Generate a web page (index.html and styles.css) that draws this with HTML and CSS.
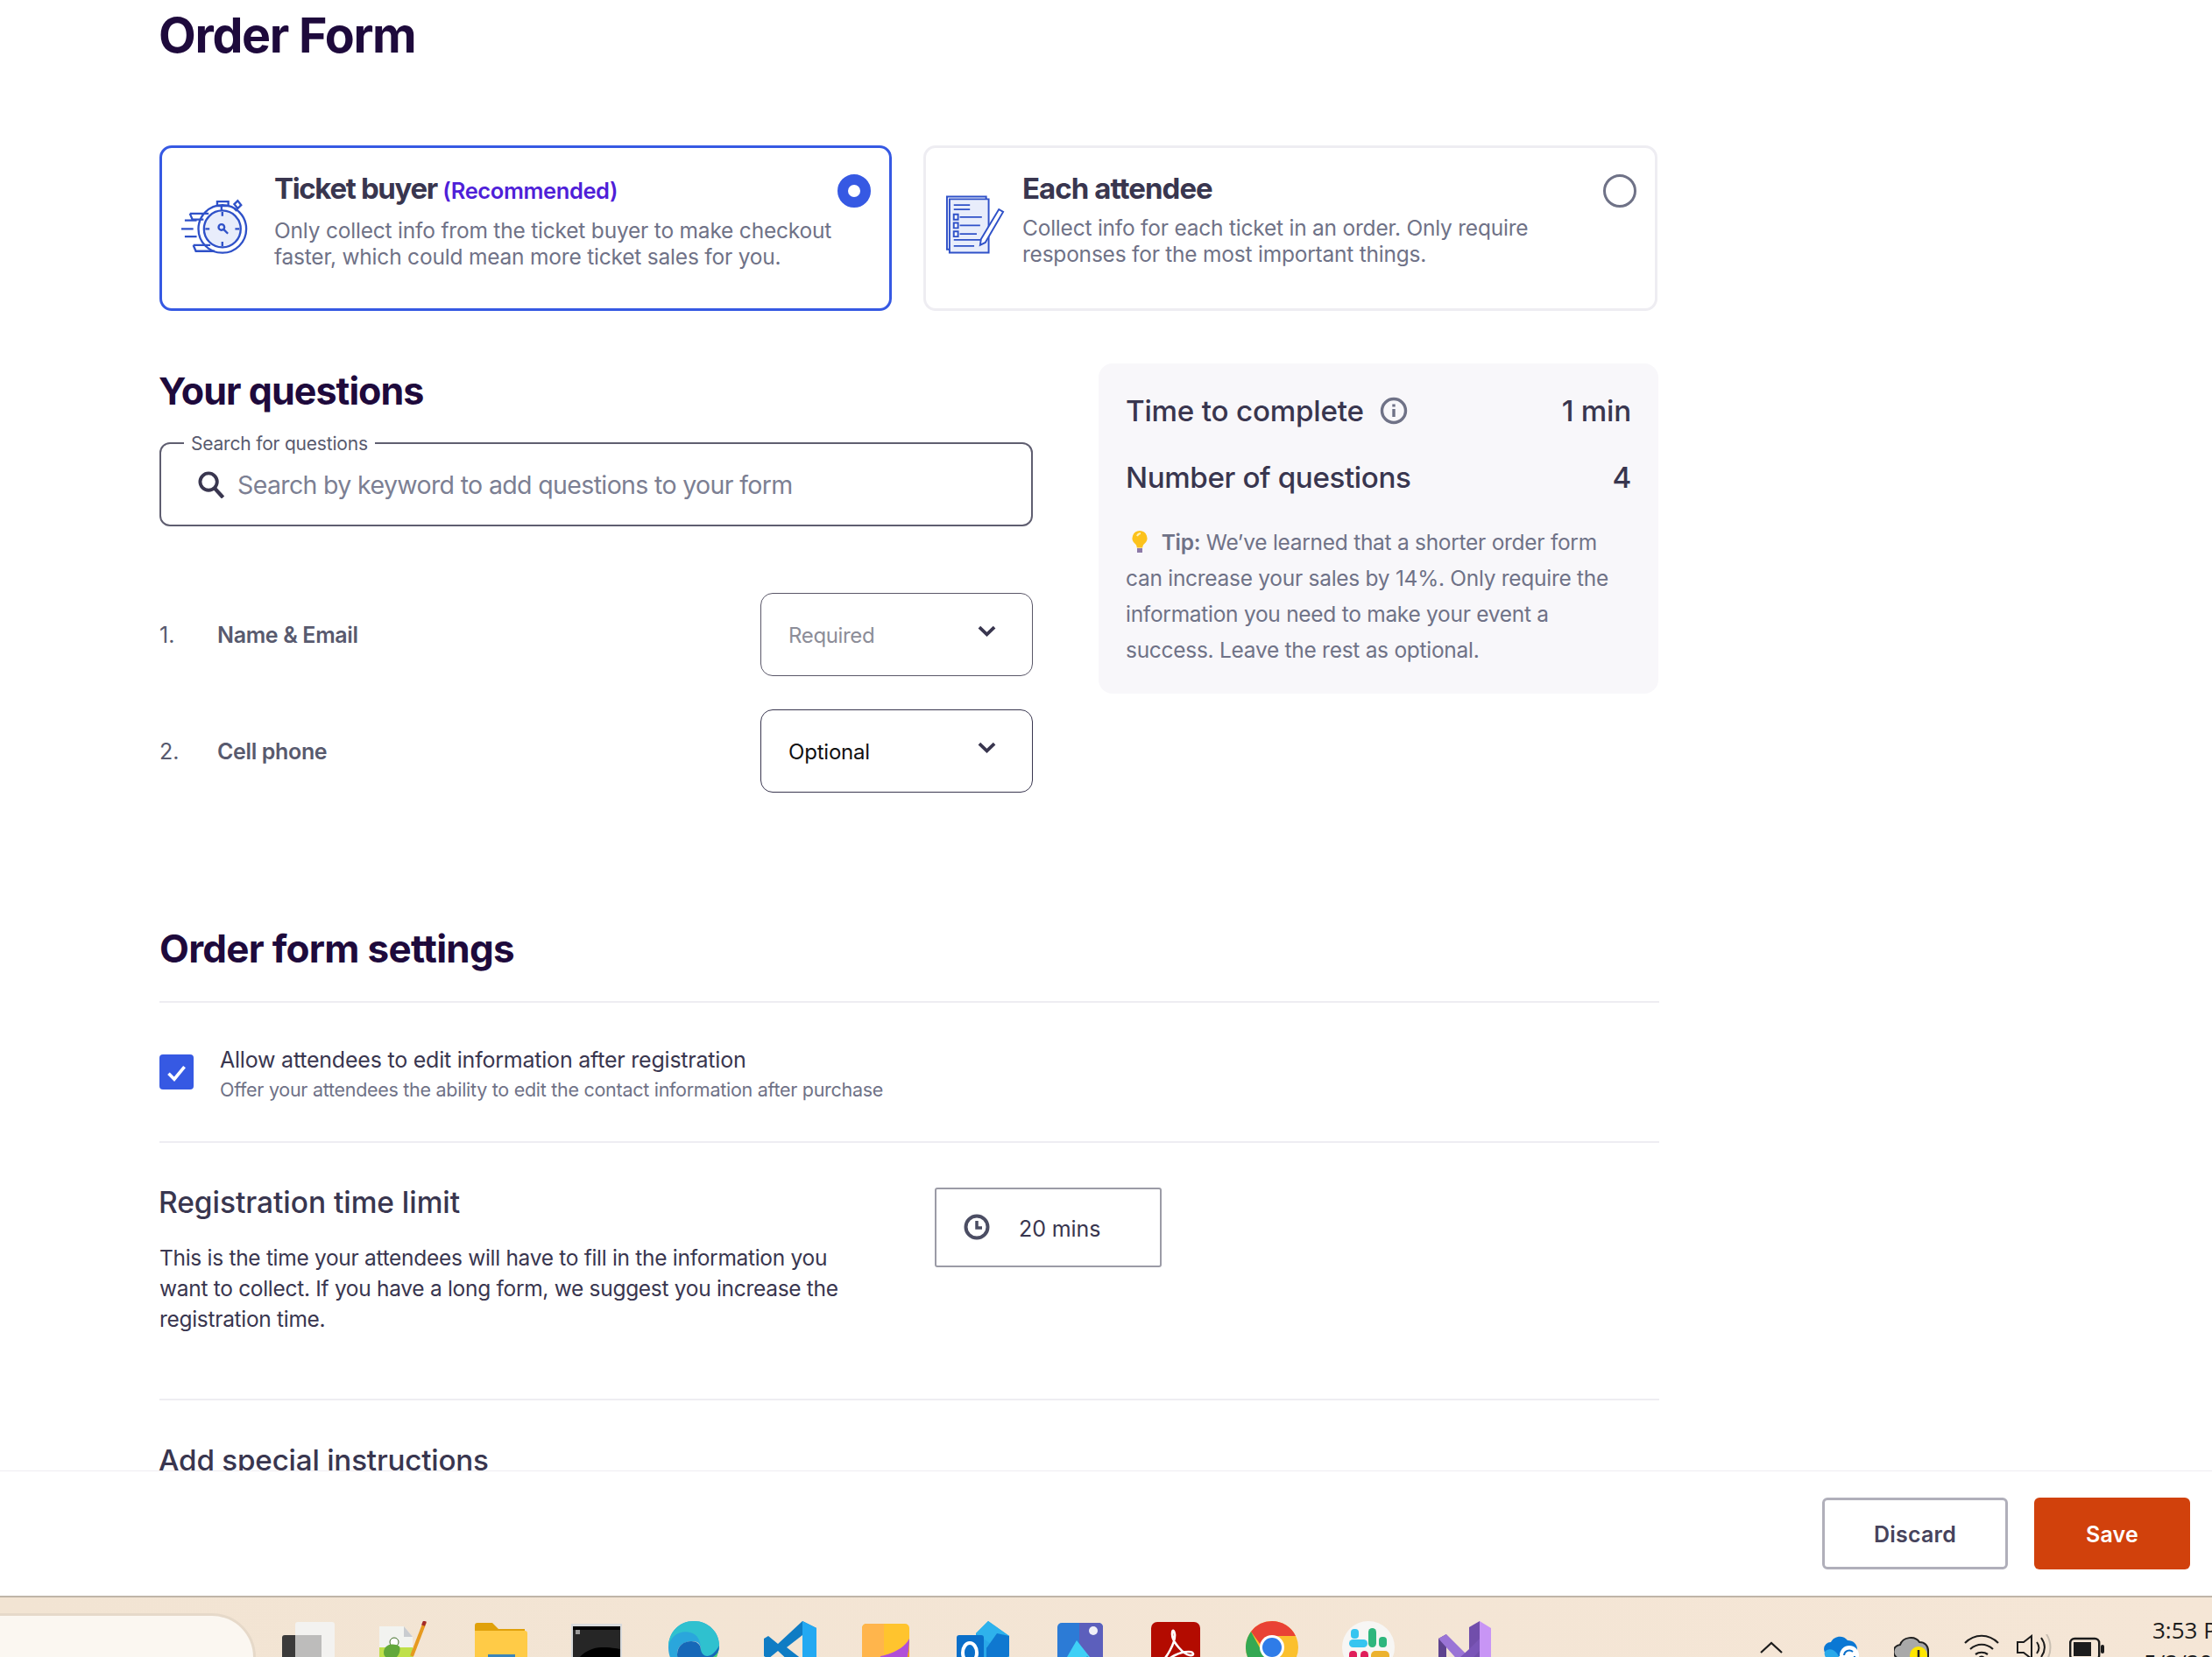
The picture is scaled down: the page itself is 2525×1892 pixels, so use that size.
FILE: index.html
```html
<!DOCTYPE html>
<html lang="en">
<head>
<meta charset="utf-8">
<title>Order Form</title>
<link rel="stylesheet" href="styles.css">
</head>
<body>
<div class="page">
  <main class="main">
    <h1 class="title">Order Form</h1>

    <div class="cards">
      <section class="card card-active">
        <svg class="card-icon" viewBox="0 0 80 68" fill="none" stroke="#2f51c8" stroke-width="2.4">
          <circle cx="48" cy="38" r="28" fill="#fff"/>
          <circle cx="48" cy="38" r="21.5" fill="#e8edfb"/>
          <path d="M42 6h13v5H42zM47 11v5"/>
          <path d="M62 9l4-4 4 5-4 4zM62 14l3 3"/>
          <path d="M10 20h22M10 20l3 7h13M14 57h20M14 57l3 7h22M0 38h14M4 28h14M4 47h14"/>
          <path d="M48 18v5M48 53v5M28 38h5M63 38h5"/>
          <circle cx="47" cy="36" r="3.4"/>
          <path d="M49.500 38.500l5 5"/>
        </svg>
        <div class="card-text">
          <h3 class="card-title card-title-buyer">Ticket buyer <span class="rec">(Recommended)</span></h3>
          <p class="card-desc">Only collect info from the ticket buyer to make checkout faster, which could mean more ticket sales for you.</p>
        </div>
        <span class="radio radio-on"></span>
      </section>
      <section class="card card-idle">
        <svg class="card-icon card-icon-doc" viewBox="0 0 70 68" fill="none" stroke="#2f51c8" stroke-width="2">
          <path d="M1 1h46v62H1z" fill="#fff"/>
          <path d="M4 4h46v63H4z" fill="#e8edfb"/>
          <path d="M9 11h19M9 16h19M9 52h38M9 59h24" stroke-width="1.800"/>
          <path d="M9 22h5v6H9zM9 32h5v6H9zM9 42h5v6H9z" fill="#fff"/>
          <path d="M16 25h26M16 35h24M16 45h20" stroke-width="1.800"/>
          <path d="M62 16l5 3-21 36-6 3 1-7z" fill="#fff"/>
        </svg>
        <div class="card-text card-text-idle">
          <h3 class="card-title">Each attendee</h3>
          <p class="card-desc">Collect info for each ticket in an order. Only require responses for the most important things.</p>
        </div>
        <span class="radio"></span>
      </section>
    </div>

    <div class="lower">
      <div class="questions">
        <h2 class="section-title">Your questions</h2>
        <div class="search">
          <span class="search-label">Search for questions</span>
          <svg class="search-icon" viewBox="0 0 32 32" fill="none" stroke="#39364f" stroke-width="4"><circle cx="12.500" cy="12.500" r="10"/><path d="M19.500 20l10 11" stroke-width="4.500"/></svg>
          <span class="search-placeholder">Search by keyword to add questions to your form</span>
        </div>
        <div class="q-row q-row-first">
          <span class="q-num">1.</span>
          <span class="q-name">Name &amp; Email</span>
          <div class="select select-off">
            <span>Required</span>
            <svg class="chev" viewBox="0 0 22 13" fill="none" stroke="#39364f" stroke-width="4"><path d="M2 2l9 8.500 9-8.500"/></svg>
          </div>
        </div>
        <div class="q-row">
          <span class="q-num">2.</span>
          <span class="q-name">Cell phone</span>
          <div class="select">
            <span>Optional</span>
            <svg class="chev" viewBox="0 0 22 13" fill="none" stroke="#39364f" stroke-width="4"><path d="M2 2l9 8.500 9-8.500"/></svg>
          </div>
        </div>
      </div>

      <aside class="panel">
        <div class="stat">
          <span class="stat-label">Time to complete
            <svg class="info" viewBox="0 0 32 32" fill="none" stroke="#6f7287" stroke-width="3.400"><circle cx="16" cy="16" r="13.500"/><path d="M16 14v9M16 8.500v3"/></svg>
          </span>
          <span class="stat-value">1 min</span>
        </div>
        <div class="stat stat-second">
          <span class="stat-label">Number of questions</span>
          <span class="stat-value">4</span>
        </div>
        <p class="tip">
          <svg class="bulb" viewBox="0 0 20 28"><path d="M10 1a8.500 8.500 0 0 0-5 15.300c1.200 1 1.600 2.400 1.800 4.200h6.400c.2-1.800.6-3.200 1.800-4.200A8.500 8.500 0 0 0 10 1z" fill="#fcc21b"/><path d="M7 7a5 5 0 0 1 4-3" stroke="#fff2b8" stroke-width="2" fill="none"/><path d="M7 21h6v5H7z" fill="#8d7aa8"/></svg>
          <b class="tip-b">Tip:</b> We’ve learned that a shorter order form can increase your sales by 14%. Only require the information you need to make your event a success. Leave the rest as optional.
        </p>
      </aside>
    </div>

    <section class="settings">
      <h2 class="section-title settings-title">Order form settings</h2>
      <div class="check-row">
        <span class="checkbox">
          <svg viewBox="0 0 24 24" fill="none" stroke="#fff" stroke-width="2.800"><path d="M5 13l5 5 9-11"/></svg>
        </span>
        <div>
          <div class="check-title">Allow attendees to edit information after registration</div>
          <div class="check-sub">Offer your attendees the ability to edit the contact information after purchase</div>
        </div>
      </div>
      <div class="limit-row">
        <div class="limit-text">
          <h3 class="sub-title">Registration time limit</h3>
          <p class="limit-desc">This is the time your attendees will have to fill in the information you want to collect. If you have a long form, we suggest you increase the registration time.</p>
        </div>
        <div class="time-box">
          <svg class="clock" viewBox="0 0 30 30" fill="none" stroke="#4b4d63" stroke-width="4"><circle cx="15" cy="15" r="12.500"/><path d="M15 8v8h6" stroke-width="3.500"/></svg>
          <span class="time-value">20 mins</span>
        </div>
      </div>
      <h3 class="sub-title instructions">Add special instructions</h3>
    </section>
  </main>

  <footer class="footer">
    <button class="btn btn-discard">Discard</button>
    <button class="btn btn-save">Save</button>
  </footer>

  <div class="taskbar">
    <div class="pill"></div>
    <div class="apps">
      <svg class="app" viewBox="0 0 60 60"><rect x="15" y="1" width="45" height="64" rx="3" fill="#f3f2f0"/><rect y="16" width="45" height="60" rx="3" fill="#3b3a3a"/><rect x="15" y="16" width="30" height="44" fill="#bdbcbb"/></svg>
      <svg class="app" viewBox="0 0 60 60"><path d="M1 6h28l10 12v42H1z" fill="#f2f3f0"/><path d="M1 30h38v30H1z" fill="#bfe04a"/><path d="M29 6l10 12H29z" fill="#c9ccd0"/><circle cx="18" cy="24" r="5" fill="#fff" stroke="#3c6b23"/><path d="M6 36c0-9 10-12 18-7 2 6-2 14-8 14S6 41 6 36z" fill="#62a83a"/><path d="M38 40L53 1" stroke="#e69a1f" stroke-width="4"/><path d="M51 5l2-5" stroke="#a32a2a" stroke-width="4"/></svg>
      <svg class="app" viewBox="0 0 60 60"><path d="M0 5a3 3 0 0 1 3-3h17l7 7h30v52H0z" fill="#e0a10a"/><path d="M0 11h57a3 3 0 0 1 3 3v46H0z" fill="#ffcb47"/><rect x="15" y="38" width="31" height="22" fill="#3b84b8"/></svg>
      <svg class="app" viewBox="0 0 60 60"><rect y="3" width="58" height="57" fill="#d8dadb"/><rect x="2" y="6" width="54" height="54" fill="#000"/><path d="M2 60c0-18 18-30 32-30 10 0 18 1 22 2V10H2z" fill="#262626"/><path d="M5 10h5v5H5z" fill="#999"/></svg>
      <svg class="app" viewBox="0 0 60 60"><path d="M1 30C1 13 13 0 30 0c17 0 29 13 29 28 0 9-5 14-12 14-6 0-9-4-9-9 0-6-3-10-9-10C16 23 11 30 11 38c0 12 8 20 19 22C13 60 1 47 1 30z" fill="#2aa6dc"/><path d="M1 30c2-14 14-20 25-17 8 2 12 9 12 20 0 5 3 9 9 9 6 0 12-5 12-14 0-15-12-28-29-28C13 0 1 13 1 30z" fill="#2fc1cf"/><path d="M38 33c2 9 12 11 21-5-1 14-10 27-24 31-10 1-24-7-24-21 0-10 8-15 16-15 6 0 11 3 11 10z" fill="#1668b8"/><path d="M47 42c6 0 12-5 12-14-1 14-8 24-16 29-5-2-8-7-5-16 2 1 5 1 9 1z" fill="#4fd36f"/></svg>
      <svg class="app" viewBox="0 0 60 60"><path d="M44 0l16 8v44l-16 8L16 34 5 43 0 40V20l5-3 11 9z" fill="#0f7cc4"/><path d="M44 0l16 8v44l-16 8z" fill="#23a9f2"/><path d="M44 16L26 30l18 14z" fill="#f3e5d4"/></svg>
      <svg class="app" viewBox="0 0 60 60"><rect x="2" y="3" width="54" height="62" rx="5" fill="#ffc42e"/><path d="M2 8a5 5 0 0 1 5-5h20v62H2z" fill="#ffb54c"/><path d="M23 60V40c10-2 26-7 33-20 0 18-4 36-14 40z" fill="#b04fd8"/><path d="M42 60c8-4 14-18 14-40v40z" fill="#f0a020"/></svg>
      <svg class="app" viewBox="0 0 60 60"><path d="M36 0l24 17v38H22V14z" fill="#29a8e8"/><path d="M36 0l24 17-14 14-24-17z" fill="#2eb2ec"/><path d="M60 17v22L34 60V31z" fill="#0556a3"/><path d="M46 14l14 3v22L34 60V31z" fill="#0f78d0"/><rect y="16" width="31" height="44" rx="3" fill="#0a6fc9"/><ellipse cx="15" cy="36" rx="8" ry="11" fill="none" stroke="#fff" stroke-width="4"/></svg>
      <svg class="app" viewBox="0 0 60 60"><rect x="5" y="2" width="52" height="62" rx="5" fill="#2c7bd6"/><path d="M30 2h22a5 5 0 0 1 5 5v50H30z" fill="#5c5fbc"/><ellipse cx="46" cy="11" rx="5" ry="5" fill="#f0f0f8"/><path d="M5 60l22-38 30 38z" fill="#3fd0f6"/><path d="M25 60l14-20 18 20z" fill="#1c70c8"/></svg>
      <svg class="app" viewBox="0 0 60 60"><rect x="2" y="1" width="56" height="62" rx="7" fill="#b30b00"/><path d="M13 47c6-4 17-22 16-32-1-6-3-5-3 0 0 9 13 23 20 24 6 1 5-4-1-4-10 0-24 6-29 16-1 3 1 4 3 1" fill="none" stroke="#fff" stroke-width="2.600"/></svg>
      <svg class="app" viewBox="0 0 60 60"><circle cx="30" cy="30" r="30" fill="#fbc02d"/><path d="M30 0a30 30 0 0 1 27 17H30a13 13 0 0 0-13 10L6 12A30 30 0 0 1 30 0z" fill="#e94235"/><path d="M6 12l13 24 10 24A30 30 0 0 1 6 12z" fill="#34a853"/><circle cx="30" cy="30" r="14" fill="#fff"/><circle cx="30" cy="30" r="11" fill="#2f7ce8"/></svg>
      <svg class="app" viewBox="0 0 60 60"><circle cx="30" cy="30" r="30" fill="#f7f6f4"/><rect x="10" y="9" width="9" height="11" rx="4" fill="#36c5f0"/><rect x="8" y="21" width="21" height="9" rx="4.500" fill="#36c5f0"/><rect x="30" y="8" width="9" height="22" rx="4.500" fill="#2eb67d"/><rect x="42" y="18" width="9" height="12" rx="4" fill="#2eb67d"/><rect x="8" y="34" width="9" height="12" rx="4" fill="#e01e5a"/><rect x="21" y="34" width="9" height="22" rx="4.500" fill="#e01e5a"/><rect x="33" y="34" width="21" height="12" rx="5" fill="#ecb22e"/></svg>
      <svg class="app" viewBox="0 0 60 60"><path d="M0 20l9-5v42l-9-5z" fill="#5e438f"/><path d="M35 7l12-7v60L35 50z" fill="#714eab"/><path d="M47 0l13 8v44l-13 8z" fill="#c895f5"/><path d="M0 20l9-5 38 38v7l-12-1z" fill="#9a74d6"/><path d="M13 52L35 32l12-12v14L22 60z" fill="#7a55b8"/></svg>
    </div>
    <div class="tray">
      <svg class="tray-chev" viewBox="0 0 26 14" fill="none" stroke="#1c1c1c" stroke-width="2.200"><path d="M1 13L13 2l12 11"/></svg>
      <svg class="tray-cloud" viewBox="0 0 40 30"><path d="M8 25a8 8 0 0 1 0-16c3-7 14-9 19-2 6 0 11 4 11 10v8z" fill="#0a78d4"/><path d="M1 20c3-4 10-4 14 2l5 8H8a8 8 0 0 1-7-10z" fill="#29a9ea"/><circle cx="29" cy="24" r="11" fill="#fff"/><path d="M23 24a6 6 0 0 1 10-4M35 25a6 6 0 0 1-10 4" stroke="#0a6fc9" stroke-width="2" fill="none"/></svg>
      <svg class="tray-cloud tray-cloud2" viewBox="0 0 40 30"><path d="M8 28a8 8 0 0 1-1-16c3-9 17-11 22-3 6 0 10 4 10 10v9z" fill="#a9a9a9" stroke="#222" stroke-width="2"/><circle cx="28" cy="24" r="10" fill="#ffe600"/><path d="M28 18v8" stroke="#222" stroke-width="2.500"/></svg>
      <svg class="tray-wifi" viewBox="0 0 40 30" fill="none" stroke="#1c1c1c" stroke-width="2.200"><path d="M1 11c11-11 27-11 38 0M7 18c8-7 18-7 26 0M13 24c4-3 10-3 14 0"/><circle cx="20" cy="29" r="2.500" fill="#1c1c1c"/></svg>
      <svg class="tray-sound" viewBox="0 0 40 30" fill="none" stroke="#1c1c1c" stroke-width="2"><path d="M1 9h7l9-7v26l-9-7H1z"/><path d="M23 9c3 4 3 9 0 13M28 4c5 7 5 15 0 22"/><path d="M34 0c6 9 6 21 0 30" stroke="#c9bfb2"/></svg>
      <svg class="tray-batt" viewBox="0 0 40 30" fill="none" stroke="#1c1c1c" stroke-width="2.400"><rect x="1.200" y="2" width="33" height="24" rx="5"/><rect x="5" y="6" width="20" height="16" fill="#1c1c1c" stroke="none"/><rect x="36" y="9" width="4" height="10" rx="2" fill="#1c1c1c" stroke="none"/></svg>
      <div class="clock-text">
        <div class="clock-time">3:53 PM</div>
        <div class="clock-date">5/2/2024</div>
      </div>
    </div>
  </div>
</div>
</body>
</html>
```

FILE: styles.css
```css
* { box-sizing: border-box; }
html, body { margin: 0; padding: 0; background: #fff; }
body { font-family: Inter, "Noto Sans", sans-serif; color: #39364f; }
h1, h2, h3, p { margin: 0; }

.page { width: 2525px; height: 1892px; display: flex; flex-direction: column; overflow: hidden; }
.main { height: 1680px; flex: none; overflow: hidden; padding-left: 182px; border-bottom: 1px solid #eeedf2; }

.title { font-size: 55.500px; line-height: 60px; margin-top: 10px; font-weight: 700; color: #1e0a3c; letter-spacing: -1.300px; margin-left: -1px; }

.cards { display: grid; grid-template-columns: 836px 838px; gap: 36px; margin-top: 96px; width: 1712px; }
.card { height: 189px; border-radius: 14px; position: relative; display: flex; background: #fff; }
.card-active { border: 3px solid #3659e3; padding-left: 22px; }
.card-idle { border: 3px solid #eeedf2; padding-left: 23px; }
.card-icon { width: 78px; height: 67px; margin-top: 55px; flex: none; }
.card-icon-doc { width: 68px; margin-top: 54px; }
.card-text { margin-left: 28px; padding-top: 26px; width: 660px; }
.card-text-idle { margin-left: 19px; }
.card-title { font-size: 33px; line-height: 40px; font-weight: 700; color: #39364f; letter-spacing: -.95px; }
.card-title-buyer { letter-spacing: -1.350px; }
.rec { font-size: 25.500px; color: #4f1fd8; font-weight: 600; letter-spacing: -.4px; }
.card-desc { font-size: 24.500px; line-height: 29.500px; color: #6f7287; margin-top: 11px; letter-spacing: -.2px; }
.card-text-idle .card-desc { margin-top: 11px; letter-spacing: -.22px; }
.radio { position: absolute; top: 30px; right: 21px; width: 38px; height: 38px; border-radius: 50%; border: 3px solid #6f7287; background: #fff; }
.radio-on { border: 12px solid #3659e3; }

.lower { display: flex; gap: 75px; margin-top: 60px; }
.questions { width: 997px; flex: none; }
.section-title { font-size: 43px; line-height: 50px; font-weight: 700; color: #1e0a3c; letter-spacing: -.95px; margin-left: -1px; }
.questions .section-title { margin-top: 6px; }
.search { position: relative; margin-top: 34px; height: 96px; border: 2px solid #5f5e70; border-radius: 12px; display: flex; align-items: center; padding-left: 42px; gap: 14px; }
.search-label { position: absolute; top: -13px; left: 26px; padding: 0 8px; background: #fff; font-size: 21px; line-height: 26px; color: #585a6e; letter-spacing: -.2px; }
.search-icon { width: 31px; height: 31px; flex: none; }
.search-placeholder { font-size: 28.500px; color: #7c7f93; letter-spacing: -.64px; }

.q-row { display: flex; align-items: center; height: 95px; margin-top: 38px; }
.q-row-first { margin-top: 76px; }
.q-num { width: 66px; font-size: 25px; color: #585a6e; }
.q-name { font-size: 25px; font-weight: 600; color: #585a6e; letter-spacing: -.35px; }
.select { margin-left: auto; width: 311px; height: 95px; border: 1.500px solid #39364f; border-radius: 14px; display: flex; align-items: center; justify-content: space-between; padding: 2px 41px 0 31px; font-size: 24px; color: #111; letter-spacing: -.2px; }
.select-off { color: #8c8d98; border-color: #5a5768; }
.select-off span { letter-spacing: -.35px; }
.chev { width: 21px; height: 13px; margin-top: -10px; }

.panel { width: 639px; height: 377px; background: #f8f7fa; border-radius: 16px; padding: 34px 31px 0; flex: none; }
.stat { display: flex; justify-content: space-between; align-items: center; height: 40px; font-size: 33.200px; font-weight: 500; color: #39364f; letter-spacing: -.22px; }
.stat-second { margin-top: 36px; letter-spacing: -.4px; }
.stat-label { display: flex; align-items: center; gap: 18px; }
.info { width: 32px; height: 32px; }
.tip { font-size: 24.500px; line-height: 41px; color: #6f7287; margin-top: 34px; letter-spacing: -.28px; }
.bulb { width: 22px; height: 28px; vertical-align: -5px; margin: 0 7px 0 5px; }
.tip-b { font-weight: 600; }

.settings { width: 1712px; margin-top: 153px; }
.settings-title { font-size: 44px; letter-spacing: -.72px; padding-bottom: 35px; border-bottom: 2px solid #eeedf2; margin-left: 0; }
.check-row { display: flex; gap: 30px; padding: 47px 0 43px; border-bottom: 2px solid #eeedf2; }
.checkbox { width: 39px; height: 40px; margin-top: 12px; background: #3659e3; border-radius: 4px; display: flex; align-items: center; justify-content: center; flex: none; }
.checkbox svg { width: 31px; height: 31px; }
.check-title { font-size: 25px; line-height: 36px; color: #39364f; letter-spacing: -.22px; }
.check-sub { font-size: 21.500px; line-height: 32px; color: #6f7287; letter-spacing: -.28px; }

.limit-row { display: flex; padding: 48px 0 73px; border-bottom: 2px solid #eeedf2; }
.limit-text { width: 885px; flex: none; }
.sub-title { font-size: 33.500px; line-height: 40px; font-weight: 500; color: #39364f; letter-spacing: -.05px; margin-left: -1px; }
.limit-desc { width: 800px; margin-top: 26px; font-size: 24.500px; line-height: 35px; color: #39364f; letter-spacing: -.3px; }
.time-box { width: 259px; height: 91px; margin-top: 3px; border: 2px solid #9b9ba6; border-radius: 3px; display: flex; align-items: center; gap: 33px; padding-left: 31px; font-size: 25px; color: #39364f; letter-spacing: -.1px; }
.time-value { padding-top: 3px; }
.clock { width: 30px; height: 30px; margin-top: -1px; }
.instructions { margin-top: 48px; font-size: 33.200px; letter-spacing: -.2px; }

.footer { height: 142px; flex: none; display: flex; justify-content: flex-end; align-items: center; gap: 30px; padding-right: 25px; background: #fff; }
.btn { height: 82px; border-radius: 6px; font-family: Inter, sans-serif; font-size: 25px; font-weight: 600; letter-spacing: .2px; padding-top: 3px; }
.btn-discard { width: 212px; background: #fff; border: 3px solid #b0afba; color: #46435c; }
.btn-save { width: 178px; background: #d1410c; border: 0; color: #fff; }

.taskbar { flex: 1; min-height: 0; overflow: hidden; position: relative; display: flex; border-top: 2px solid #bfb5a8; background: linear-gradient(90deg, #f2e4d3, #f5e6d6); }
.pill { width: 292px; height: 90px; flex: none; margin-top: 18px; background: #fbf7f1; border: 3px solid #e6d9c9; border-left: 0; border-radius: 0 50px 0 0; }
.apps { display: flex; gap: 50px; margin-left: 30px; padding-top: 27px; align-items: flex-start; }
.app { width: 60px; height: 60px; flex: none; }
.tray { position: absolute; top: 0; right: 0; width: 516px; height: 68px; }
.tray svg { position: absolute; }
.tray-chev { left: 0; top: 50px; width: 26px; height: 14px; }
.tray-cloud { left: 73px; top: 42px; width: 40px; height: 30px; }
.tray-cloud2 { left: 153px; }
.tray-wifi { left: 233px; top: 41px; width: 40px; height: 30px; }
.tray-sound { left: 293px; top: 42px; width: 40px; height: 30px; }
.tray-batt { left: 353px; top: 45px; width: 40px; height: 30px; }
.clock-text { position: absolute; left: 448px; top: 21px; width: 120px; font-family: "Open Sans", sans-serif; color: #1c1c1c; white-space: nowrap; }
.clock-time { font-size: 26px; line-height: 32px; }
.clock-date { font-size: 26px; line-height: 32px; margin-top: 5px; margin-left: -10px; }
```
